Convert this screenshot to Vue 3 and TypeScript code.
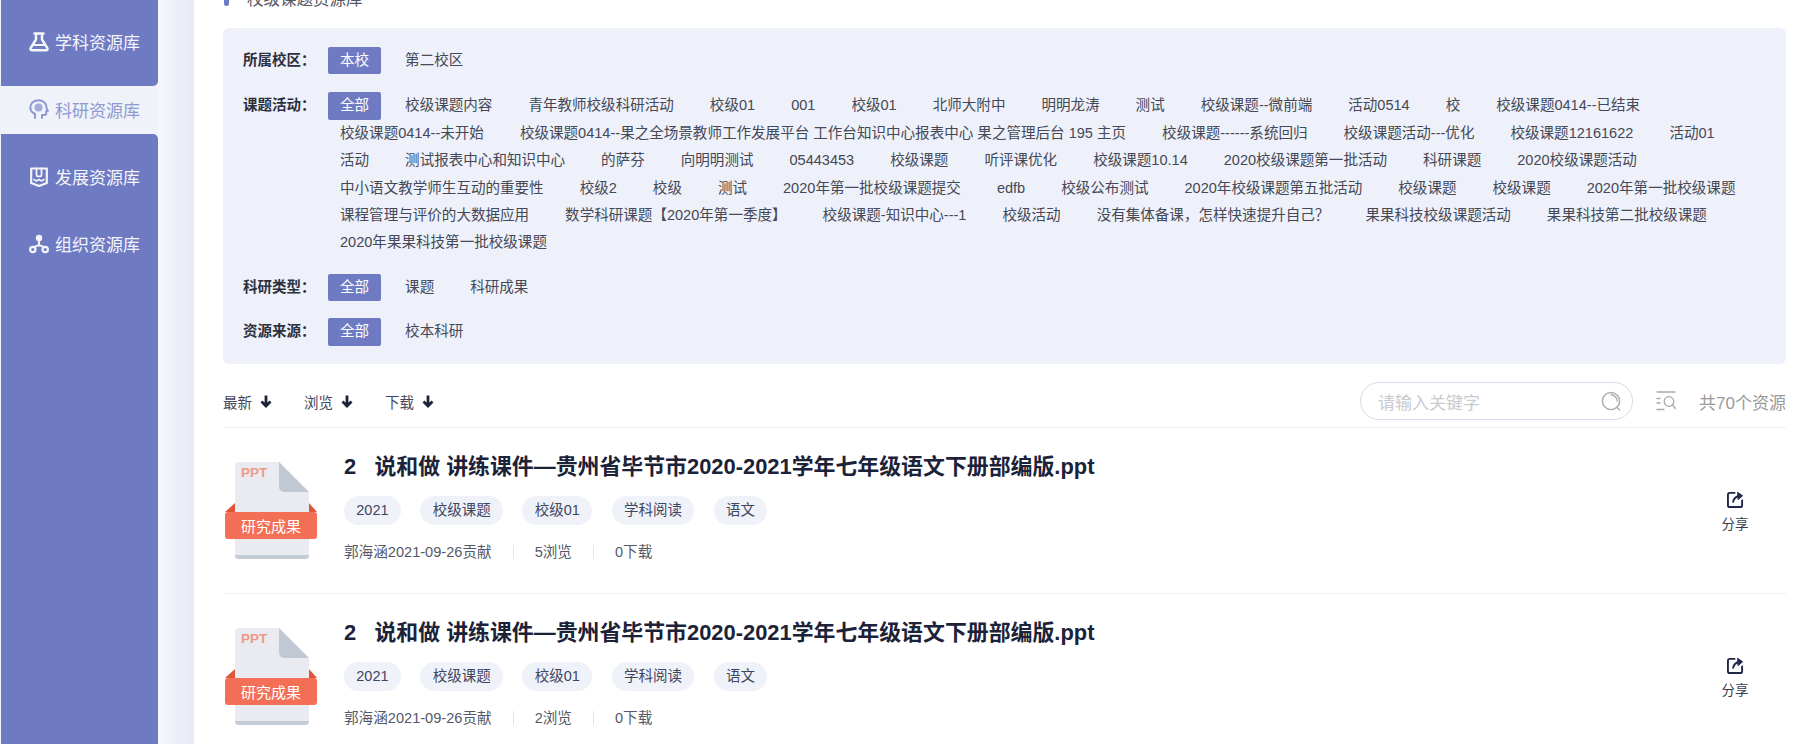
<script setup lang="ts">
interface FilterRow {
  label: string
  items: string[]
}

interface ResourceRow {
  views: number
}

const filters: FilterRow[] = [
  { label: '所属校区：', items: ['本校', '第二校区'] },
  {
    label: '课题活动：',
    items: [
      '全部', '校级课题内容', '青年教师校级科研活动', '校级01', '001', '校级01', '北师大附中', '明明龙涛', '测试', '校级课题--微前端', '活动0514', '校', '校级课题0414--已结束',
      '校级课题0414--未开始', '校级课题0414--果之全场景教师工作发展平台 工作台知识中心报表中心 果之管理后台 195 主页', '校级课题------系统回归', '校级课题活动---优化', '校级课题12161622', '活动01',
      '活动', '测试报表中心和知识中心', '的萨芬', '向明明测试', '05443453', '校级课题', '听评课优化', '校级课题10.14', '2020校级课题第一批活动', '科研课题', '2020校级课题活动',
      '中小语文教学师生互动的重要性', '校级2', '校级', '测试', '2020年第一批校级课题提交', 'edfb', '校级公布测试', '2020年校级课题第五批活动', '校级课题', '校级课题', '2020年第一批校级课题',
      '课程管理与评价的大数据应用', '数学科研课题【2020年第一季度】', '校级课题-知识中心---1', '校级活动', '没有集体备课，怎样快速提升自己？', '果果科技校级课题活动', '果果科技第二批校级课题',
      '2020年果果科技第一批校级课题',
    ],
  },
  { label: '科研类型：', items: ['全部', '课题', '科研成果'] },
  { label: '资源来源：', items: ['全部', '校本科研'] },
]

const sorts: string[] = ['最新', '浏览', '下载']
const pills: string[] = ['2021', '校级课题', '校级01', '学科阅读', '语文']
const resources: ResourceRow[] = [{ views: 5 }, { views: 2 }]
</script>

<template>
  <div class="page">
    <aside class="sidebar">
      <div class="block block-top">
        <div class="nav-item">
          <svg class="nav-icon" viewBox="0 0 20 20" fill="none" stroke="currentColor" stroke-width="2.500" stroke-linejoin="round" stroke-linecap="round">
            <path d="M5.500 1.500h9M7 1.500v6L1.800 15.800q-1 2.400 1.400 2.400h13.600q2.400 0 1.400-2.400L13 7.500v-6" />
            <path d="M4.500 13h11" stroke-width="1.800" />
          </svg>
          <span>学科资源库</span>
        </div>
      </div>
      <div class="nav-item active">
        <svg class="nav-icon" viewBox="0 0 20 20" fill="none" stroke="currentColor" stroke-width="2" stroke-linecap="round" stroke-linejoin="round">
          <path d="M6 19v-4C3 13.500 1.300 11.300 1.300 8.500 1.300 4.300 5 1.200 9.500 1.200s8 3 8 7.300l1.300 3.500h-1.600v2.300q0 1.700-1.700 1.700H13v3" />
          <circle cx="9.500" cy="8.500" r="4" fill="currentColor" stroke="none" opacity=".8" />
        </svg>
        <span>科研资源库</span>
      </div>
      <div class="block block-bottom">
        <div class="nav-item">
          <svg class="nav-icon" viewBox="0 0 20 20" fill="none" stroke="currentColor" stroke-width="2.200" stroke-linejoin="round" stroke-linecap="round">
            <path d="M2.200 1.500h15.600v14.500L10 19l-7.800-3z" />
            <path d="M7.500 1.500v6.500q0 1.300 1.300 1.300h2.400q1.300 0 1.300-1.300V1.500" stroke-width="1.800" />
            <path d="M5 12.500l2.500 1.500 2.500-1.500 2.500 1.500 2.500-1.500" stroke-width="1.600" />
          </svg>
          <span>发展资源库</span>
        </div>
        <div class="nav-item">
          <svg class="nav-icon" viewBox="0 0 20 20" fill="none" stroke="currentColor" stroke-width="2.200">
            <circle cx="10" cy="4" r="3.200" fill="currentColor" stroke="none" />
            <circle cx="3.800" cy="15.500" r="2.700" />
            <circle cx="16.200" cy="15.500" r="2.700" />
            <path d="M10 6v5.500M5.500 13.500q1-2 4.500-2t4.500 2" />
          </svg>
          <span>组织资源库</span>
        </div>
      </div>
    </aside>

    <div class="gutter"></div>

    <main class="main">
      <h2 class="heading"><i class="heading-mark"></i>校级课题资源库</h2>

      <section class="panel">
        <div v-for="filter in filters" :key="filter.label" class="filter-row">
          <div class="filter-label">{{ filter.label }}</div>
          <div class="filter-items">
            <span
              v-for="(item, index) in filter.items"
              :key="index"
              class="filter-item"
              :class="{ selected: index === 0 }"
            >{{ item }}</span>
          </div>
        </div>
      </section>

      <div class="toolbar">
        <div class="sorts">
          <span v-for="sort in sorts" :key="sort" class="sort">
            {{ sort }}
            <svg class="sort-arrow" viewBox="0 0 12 13" fill="none" stroke="currentColor" stroke-width="2.800">
              <path d="M6 .5v10M1.500 6.500 6 11l4.500-4.500" />
            </svg>
          </span>
        </div>
        <div class="toolbar-right">
          <div class="search">
            <span class="placeholder">请输入关键字</span>
            <svg class="search-icon" viewBox="0 0 22 22" fill="none" stroke="#adadad" stroke-width="1.500" stroke-linecap="round">
              <circle cx="10.500" cy="10.500" r="9" />
              <path d="M10.500 4a6.500 6.500 0 0 1 6.500 6.500M16.800 17.200 19.500 20" />
            </svg>
          </div>
          <svg class="filter-icon" viewBox="0 0 20 20" fill="none" stroke="#a9a9a9" stroke-width="1.300" stroke-linecap="round">
            <path d="M1 1h18M1 7.500h3M1 12h3M1 18.500h7" />
            <circle cx="13" cy="10.500" r="4.800" />
            <path d="M16.500 14l3 3.500" />
          </svg>
          <span class="total">共70个资源</span>
        </div>
      </div>

      <article v-for="(resource, index) in resources" :key="index" class="resource">
        <svg class="file-icon" viewBox="0 0 92 97">
          <path d="M14 0h40l30 30v63q0 4-4 4H14q-4 0-4-4V4q0-4 4-4z" fill="#e9ebf0" />
          <path d="M10 93h74q0 4-4 4H14q-4 0-4-4z" fill="#c3cbd5" />
          <path d="M54 0l30 30H60q-6 0-6-6z" fill="#c0c8d3" />
          <path d="M0 50 10 41v9zM92 50 84 41v9z" fill="#e0563a" />
          <rect x="0" y="50" width="92" height="27" rx="3" fill="#f36f55" />
          <text x="16" y="15" class="file-kind">PPT</text>
          <text x="46" y="70" class="file-badge" text-anchor="middle">研究成果</text>
        </svg>
        <div class="resource-body">
          <h3 class="resource-title">2&nbsp;&nbsp; 说和做 讲练课件—贵州省毕节市2020-2021学年七年级语文下册部编版.ppt</h3>
          <div class="pills">
            <span v-for="pill in pills" :key="pill" class="pill">{{ pill }}</span>
          </div>
          <div class="meta">
            <span class="meta-item">郭海涵2021-09-26贡献</span>
            <span class="meta-item">{{ resource.views }}浏览</span>
            <span class="meta-item">0下载</span>
          </div>
        </div>
        <div class="share">
          <svg class="share-icon" viewBox="0 0 18 18" fill="none" stroke="#1f2747" stroke-width="2" stroke-linecap="round" stroke-linejoin="round">
            <path d="M8 2H3q-2 0-2 2v11q0 2 2 2h11q2 0 2-2v-5" />
            <path d="M6.500 11.500Q7.500 6 12.500 5.500" />
            <path d="M11.500 1.500 16.500 5l-4.500 4z" fill="#1f2747" stroke-width="1" />
          </svg>
          <span>分享</span>
        </div>
      </article>
    </main>
  </div>
</template>

<style scoped>
.page {
  display: flex;
  height: 744px;
  overflow: hidden;
  background: #fff;
  font-family: "Liberation Sans", "Noto Sans CJK SC", sans-serif;
}

.sidebar {
  display: flex;
  flex-direction: column;
  flex: none;
  box-sizing: border-box;
  width: 158px;
  border-left: 1px solid #eef1f9;
  background: #eff2f9;
}

.gutter {
  flex: none;
  width: 36px;
  background: linear-gradient(90deg, #f6f7fc, #e6e9f5);
}

.block {
  background: #6e7bc3;
}

.block-top {
  height: 86px;
  padding-top: 8px;
  box-sizing: border-box;
  border-bottom-right-radius: 5px;
}

.block-bottom {
  flex: 1;
  padding-top: 9px;
  border-top-right-radius: 5px;
}

.nav-item {
  display: flex;
  align-items: center;
  gap: 6px;
  height: 67px;
  padding-left: 29px;
  font-size: 17px;
  color: #f4f5fb;
}

.nav-item.active {
  box-sizing: border-box;
  height: 48px;
  padding-bottom: 2px;
  color: #8e99d2;
}

.nav-icon {
  flex: none;
  width: 20px;
  height: 20px;
  margin-left: -1px;
}

.main {
  flex: 1;
  min-width: 0;
  padding: 0 25px 0 29px;
  background: #fff;
}

.heading {
  display: flex;
  align-items: center;
  height: 20px;
  margin: -12px 0 0;
  font-size: 16.500px;
  font-weight: 400;
  color: #555965;
}

.heading-mark {
  width: 5px;
  height: 16px;
  margin: 0 18px 0 1px;
  border-radius: 2.500px;
  background: #6e7bc3;
}

.panel {
  margin-top: 20px;
  height: 336px;
  padding-top: 19px;
  box-sizing: border-box;
  border-radius: 6px;
  background: #eef1f9;
}

.filter-row {
  display: flex;
  margin-bottom: 18px;
}

.filter-row:nth-child(2),
.filter-row:nth-child(3) {
  margin-bottom: 17px;
}

.filter-label {
  flex: none;
  width: 85px;
  margin-left: 20px;
  font-size: 14.500px;
  font-weight: 600;
  line-height: 27px;
  color: #2c2f3e;
}

.filter-items {
  display: flex;
  flex-wrap: wrap;
  flex: 1;
  column-gap: 12px;
  padding-right: 20px;
}

.filter-item {
  padding: 0 12px;
  font-size: 14.550px;
  line-height: 27.400px;
  white-space: nowrap;
  color: #454856;
}

.filter-item.selected {
  border-radius: 2px;
  background: #6e7bc3;
  color: #fff;
}

.toolbar {
  display: flex;
  align-items: center;
  justify-content: space-between;
  box-sizing: border-box;
  height: 64px;
  padding-top: 11px;
  border-bottom: 1px solid #eff0f3;
}

.sorts {
  display: flex;
  gap: 32px;
}

.sort {
  display: flex;
  align-items: center;
  gap: 8px;
  font-size: 14.500px;
  color: #44485a;
}

.sort-arrow {
  width: 12px;
  height: 13px;
  color: #1c2238;
}

.toolbar-right {
  display: flex;
  align-items: center;
}

.search {
  display: flex;
  align-items: center;
  justify-content: space-between;
  box-sizing: border-box;
  width: 273px;
  height: 38px;
  padding: 0 10px 0 17px;
  border: 1px solid #d5dbe8;
  border-radius: 19px;
}

.placeholder {
  font-size: 17px;
  color: #c8cacf;
}

.search-icon {
  width: 21px;
  height: 21px;
}

.filter-icon {
  width: 20px;
  height: 20px;
  margin: 0 23px;
}

.total {
  font-size: 17px;
  white-space: nowrap;
  color: #9a9a9a;
}

.resource {
  display: flex;
  box-sizing: border-box;
  height: 166px;
  padding-left: 2px;
  border-bottom: 1px solid #eff0f3;
}

.file-icon {
  flex: none;
  width: 92px;
  height: 97px;
  margin: 34px 27px 0 0;
}

.file-kind {
  font-size: 13.500px;
  font-weight: 700;
  fill: #ee9a87;
}

.file-badge {
  font-size: 15px;
  fill: #fff;
}

.resource-body {
  flex: 1;
  min-width: 0;
  padding-top: 24px;
}

.resource-title {
  margin: 0;
  font-size: 21.900px;
  font-weight: 700;
  line-height: 30px;
  color: #1c2238;
}

.pills {
  display: flex;
  gap: 19.500px;
  margin-top: 14px;
}

.pill {
  padding: 0 12.300px;
  border-radius: 15px;
  background: #eff2f9;
  font-size: 14.500px;
  line-height: 29px;
  color: #41465f;
}

.meta {
  display: flex;
  align-items: center;
  margin-top: 20px;
  font-size: 14.600px;
  line-height: 20px;
  color: #555967;
}

.meta-item {
  line-height: 14px;
}

.meta-item + .meta-item {
  margin-left: 21px;
  padding-left: 21px;
  border-left: 1px solid #e0e4ee;
}

.share {
  display: flex;
  flex-direction: column;
  align-items: center;
  flex: none;
  width: 102px;
  padding-top: 63px;
  font-size: 13.500px;
  color: #3a3d4d;
}

.share-icon {
  width: 17px;
  height: 17px;
  margin-bottom: 5px;
}
</style>

<style>
html,
body {
  margin: 0;
  overflow: hidden;
  background: #fff;
}
</style>
